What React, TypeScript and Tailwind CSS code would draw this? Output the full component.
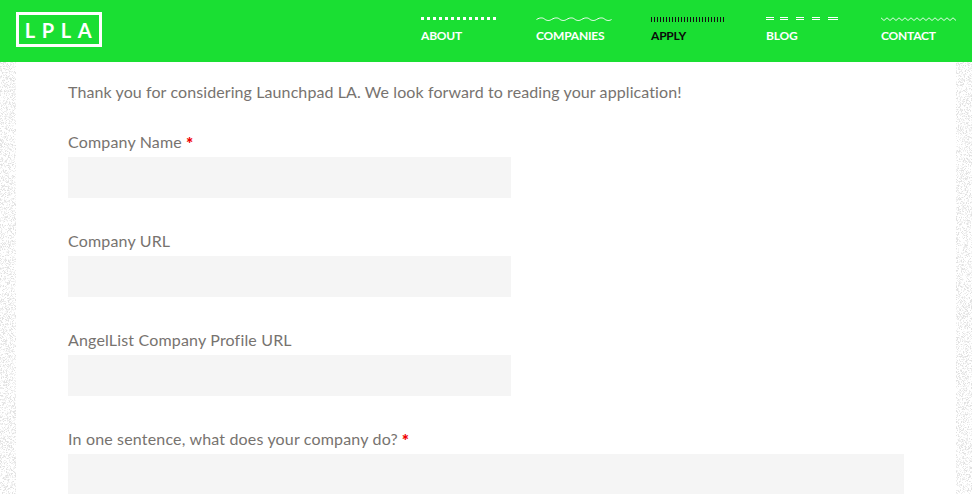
import React from "react";

function rng(seed: number) {
  let s = seed;
  return () => {
    s = (s * 16807) % 2147483647;
    return s / 2147483647;
  };
}

function Noise({ seed }: { seed: number }) {
  const r = rng(seed);
  const cells: React.ReactElement[] = [];
  for (let y = 0; y < 432; y++) {
    for (let x = 0; x < 16; x++) {
      const v = r();
      if (v < 0.45) {
        const g = v < 0.12 ? "#e2e2e2" : v < 0.28 ? "#ececec" : "#f4f4f4";
        cells.push(<rect key={x + "-" + y} x={x} y={y} width="1" height="1" fill={g} />);
      }
    }
  }
  return (
    <svg width="16" height="432" viewBox="0 0 16 432" shapeRendering="crispEdges" className="block shrink-0">
      {cells}
    </svg>
  );
}

function Dots() {
  return (
    <svg width="75" height="4" viewBox="0 0 75 4" shapeRendering="crispEdges" className="block">
      {Array.from({ length: 13 }, (_, i) => (
        <rect key={i} x={i * 6} y="0" width="3" height="3" fill="#fff" />
      ))}
    </svg>
  );
}

function Wave() {
  let d = "M0.5 2.5";
  for (let i = 0; i < 5; i++) {
    const x = i * 15 + 0.5;
    d += ` C${x + 4} 0,${x + 7} 1,${x + 8} 2 S${x + 12} 4.5,${x + 15} 2.5`;
  }
  return (
    <svg width="76" height="4" viewBox="0 0 76 4" className="block">
      <path d={d} fill="none" stroke="#fff" strokeWidth="1" />
    </svg>
  );
}

function Ticks() {
  return (
    <svg width="75" height="6" viewBox="0 0 75 6" shapeRendering="crispEdges" className="block">
      {Array.from({ length: 25 }, (_, i) => (
        <rect key={i} x={i * 3} y="1" width="1" height="5" fill="#111" />
      ))}
    </svg>
  );
}

function Dashes() {
  return (
    <svg width="73" height="4" viewBox="0 0 73 4" shapeRendering="crispEdges" className="block">
      {[
        [0, 8],
        [14, 8],
        [30, 8],
        [46, 8],
        [62, 10],
      ].map(([x, w]) => (
        <g key={x} fill="#fff">
          <rect x={x} y="0" width={w} height="1" />
          <rect x={x} y="2" width={w} height="1" />
        </g>
      ))}
    </svg>
  );
}

function Zigzag() {
  let pts = "";
  for (let i = 0; i <= 25; i++) pts += `${i * 3},${i % 2 ? 3.5 : 0.8} `;
  return (
    <svg width="75" height="4" viewBox="0 0 75 4" className="block">
      <polyline points={pts} fill="none" stroke="#fff" strokeWidth="0.9" />
    </svg>
  );
}

const nav: { label: string; art: React.ReactElement; dark?: boolean }[] = [
  { label: "ABOUT", art: <Dots /> },
  { label: "COMPANIES", art: <Wave /> },
  { label: "APPLY", art: <Ticks />, dark: true },
  { label: "BLOG", art: <Dashes /> },
  { label: "CONTACT", art: <Zigzag /> },
];

function Field({ label, required, wide, cut }: { label: string; required?: boolean; wide?: boolean; cut?: boolean }) {
  return (
    <div className="flex flex-col">
      <label className="h-[28px] text-[16px] leading-[26px] tracking-[0.17px] text-[#77736f]">
        {label}
        {required && <span className="ml-1 align-[-2px] text-[17px] font-black leading-none text-[#f00000]">*</span>}
      </label>
      <div className={`bg-[#f5f5f5] ${wide ? "w-[836px]" : "w-[443px]"} ${cut ? "h-[40px]" : "h-[41px]"}`} />
    </div>
  );
}

export default function App() {
  return (
    <div className="h-[494px] w-[972px] overflow-hidden bg-white font-['Lato','Open_Sans',sans-serif]">
      <header className="flex h-[62px] items-start justify-between bg-[#1adf33] pl-4">
        <div className="mt-3 flex h-[35px] w-[86px] items-center justify-center border-[3px] border-white">
          <span className="pl-[5px] text-[20px] font-bold leading-none tracking-[6.6px] text-white">LPLA</span>
        </div>
        <nav className="flex">
          {nav.map((n) => (
            <div key={n.label} className="flex w-[115px] flex-col pt-4 last:w-[91px]">
              <div className="flex h-[6px] items-center">{n.art}</div>
              <span className={`mt-[6px] text-[12px] font-bold leading-[16px] tracking-[-0.2px] ${n.dark ? "text-[#0a0a0a]" : "text-white"}`}>
                {n.label}
              </span>
            </div>
          ))}
        </nav>
      </header>
      <div className="flex">
        <Noise seed={12345} />
        <main className="flex w-[940px] flex-col pl-[52px]">
          <p className="mt-[17px] mb-[24px] h-[26px] text-[16px] leading-[26px] tracking-[0.096px] text-[#77736f]">
            Thank you for considering Launchpad LA. We look forward to reading your application!
          </p>
          <div className="flex flex-col gap-[30px]">
            <Field label="Company Name" required />
            <Field label="Company URL" />
            <Field label="AngelList Company Profile URL" />
            <Field label="In one sentence, what does your company do?" required wide cut />
          </div>
        </main>
        <Noise seed={98765} />
      </div>
    </div>
  );
}
